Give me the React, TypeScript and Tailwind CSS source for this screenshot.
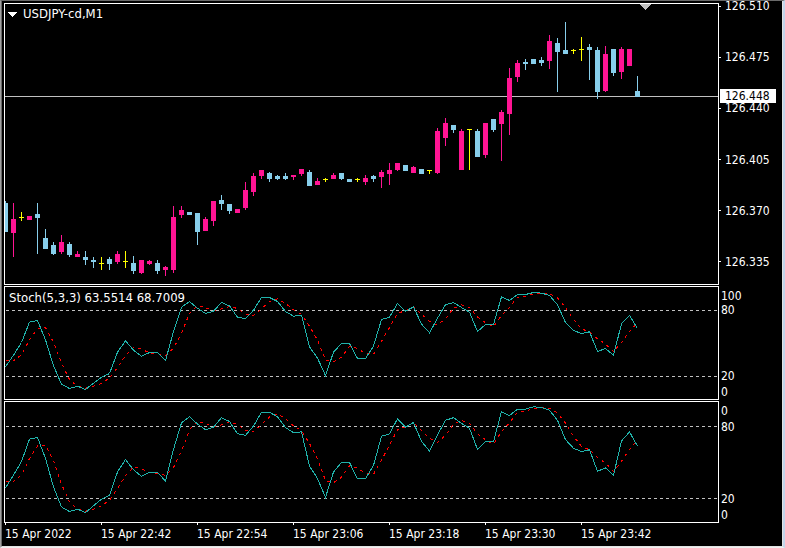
import type { ReactNode } from 'react';

type Kind = 'up' | 'down' | 'doji';

// [kind, high, low, bodyTop, bodyBottom], in window pixels
type Candle = [Kind, number, number, number, number];

const PLOT_TOP = 4;
const STEP = 8;

const COLORS: Record<Kind, string> = {
  up: '#ff1493',
  down: '#87ceeb',
  doji: '#ffff00',
};

const CANDLES: Candle[] = [
  ['down', 201, 232, 203, 232],
  ['up', 203, 257, 219, 233],
  ['doji', 212, 221, 217, 218],
  ['up', 216, 220, 216, 220],
  ['down', 203, 254, 214, 218],
  ['down', 229, 249, 238, 249],
  ['down', 242, 255, 245, 254],
  ['up', 235, 254, 242, 252],
  ['down', 242, 257, 244, 255],
  ['up', 251, 257, 254, 257],
  ['down', 251, 265, 257, 260],
  ['down', 257, 268, 260, 262],
  ['doji', 257, 270, 263, 264],
  ['down', 257, 270, 259, 264],
  ['up', 251, 264, 254, 262],
  ['doji', 251, 268, 261, 262],
  ['down', 256, 274, 263, 271],
  ['up', 260, 274, 260, 273],
  ['up', 260, 265, 261, 264],
  ['down', 260, 274, 263, 271],
  ['up', 266, 276, 267, 270],
  ['up', 206, 273, 217, 270],
  ['up', 206, 218, 210, 215],
  ['down', 212, 215, 212, 215],
  ['down', 213, 245, 213, 232],
  ['up', 217, 231, 219, 231],
  ['up', 201, 226, 201, 221],
  ['down', 195, 210, 200, 204],
  ['down', 204, 214, 204, 211],
  ['up', 209, 213, 209, 213],
  ['up', 182, 210, 190, 208],
  ['up', 173, 196, 176, 192],
  ['up', 170, 179, 170, 176],
  ['down', 172, 182, 173, 179],
  ['down', 175, 180, 176, 179],
  ['down', 173, 180, 176, 179],
  ['up', 175, 180, 175, 177],
  ['up', 169, 176, 169, 174],
  ['down', 170, 186, 172, 186],
  ['up', 178, 185, 181, 185],
  ['doji', 178, 182, 179, 180],
  ['up', 173, 179, 175, 179],
  ['down', 173, 180, 173, 179],
  ['down', 179, 182, 179, 182],
  ['doji', 178, 182, 179, 180],
  ['up', 175, 185, 178, 182],
  ['down', 175, 182, 176, 179],
  ['up', 170, 188, 172, 177],
  ['up', 163, 185, 170, 174],
  ['up', 163, 171, 163, 170],
  ['down', 165, 171, 165, 171],
  ['up', 166, 173, 167, 173],
  ['down', 169, 174, 169, 174],
  ['doji', 170, 174, 170, 171],
  ['up', 128, 174, 131, 173],
  ['up', 118, 146, 123, 138],
  ['down', 125, 133, 125, 130],
  ['up', 129, 170, 131, 170],
  ['doji', 129, 170, 129, 130],
  ['down', 129, 157, 131, 157],
  ['up', 123, 158, 123, 155],
  ['down', 119, 132, 119, 130],
  ['up', 110, 161, 112, 124],
  ['up', 68, 135, 78, 114],
  ['up', 60, 82, 63, 77],
  ['down', 59, 70, 62, 64],
  ['down', 59, 64, 59, 64],
  ['down', 57, 66, 60, 63],
  ['up', 35, 69, 41, 61],
  ['down', 38, 92, 43, 52],
  ['down', 22, 54, 50, 54],
  ['doji', 49, 54, 50, 51],
  ['doji', 37, 61, 49, 50],
  ['down', 44, 80, 47, 50],
  ['down', 47, 99, 50, 92],
  ['up', 46, 92, 54, 91],
  ['down', 49, 76, 49, 73],
  ['up', 47, 79, 49, 72],
  ['up', 49, 66, 49, 66],
  ['down', 76, 97, 91, 97],
];

const STOCH = [
  28.8, 39.4, 50.9, 69.4, 70.9, 53.3, 29.7, 13.0, 9.1, 11.2,
  8.2, 13.9, 19.4, 22.7, 42.1, 52.4, 43.9, 38.5, 41.8, 41.8,
  34.5, 60.9, 83.0, 88.2, 82.1, 77.3, 79.4, 87.3, 84.2, 73.9,
  72.7, 80.3, 91.8, 91.8, 88.2, 79.1, 74.8, 75.5, 47.0, 36.7,
  20.9, 42.1, 50.0, 50.0, 36.4, 36.4, 47.6, 71.8, 73.9, 86.4,
  79.4, 83.3, 67.6, 59.7, 73.0, 85.2, 87.3, 82.7, 78.5, 60.9,
  67.3, 67.3, 92.4, 89.1, 94.5, 94.5, 96.4, 95.8, 93.6, 85.2,
  69.1, 61.8, 59.1, 60.6, 42.7, 45.5, 39.4, 67.9, 75.5, 63.6,
];

// %D is the 3-bar average of %K
const SIGNAL = STOCH.map((v, i) =>
  i < 2 ? 34.2 : (v + STOCH[i - 1] + STOCH[i - 2]) / 3,
);

const PRICES = ['126.510', '126.475', '126.440', '126.405', '126.370', '126.335'];

const TIMES = [
  '15 Apr 2022',
  '15 Apr 22:42',
  '15 Apr 22:54',
  '15 Apr 23:06',
  '15 Apr 23:18',
  '15 Apr 23:30',
  '15 Apr 23:42',
];

function PriceChart() {
  return (
    <svg className="block h-[280px] w-full" shapeRendering="crispEdges" aria-label="USDJPY candles">
      <rect x={0} y={96 - PLOT_TOP} width="100%" height={1} fill="#c0c0c0" />
      <path d="M634 0h12l-6 6z" fill="#c0c0c0" />
      {CANDLES.map(([kind, high, low, top, bottom], i) => (
        <g key={i} fill={COLORS[kind]}>
          <rect x={i * STEP} y={high - PLOT_TOP} width={1} height={low - high} />
          <rect x={i * STEP - 2} y={top - PLOT_TOP} width={5} height={bottom - top} />
        </g>
      ))}
    </svg>
  );
}

interface StochChartProps {
  className: string;
  level80: number;
  scale: number;
}

function StochChart({ className, level80, scale }: StochChartProps) {
  const toY = (v: number) => level80 + (80 - v) * scale;
  const points = (values: number[]) =>
    values.map((v, i) => `${i * STEP + 0.5},${(toY(v) + 0.5).toFixed(1)}`).join(' ');

  return (
    <svg className={`block w-full ${className}`} shapeRendering="crispEdges" fill="none" aria-label="Stochastic oscillator">
      {[80, 20].map((level) => (
        <line
          key={level}
          x1={1}
          x2="100%"
          y1={toY(level) + 0.5}
          y2={toY(level) + 0.5}
          stroke="#c0c0c0"
          strokeDasharray="3 3"
        />
      ))}
      <polyline points={points(SIGNAL)} stroke="#ff0000" strokeDasharray="3 4" />
      <polyline points={points(STOCH)} stroke="#20b2aa" />
    </svg>
  );
}

function Panel({ children }: { children: ReactNode }) {
  return <div className="relative min-w-0 flex-1 overflow-hidden border border-white">{children}</div>;
}

export default function App() {
  return (
    <main className="border-t border-r-2 border-b border-l border-t-[#696969] border-r-[#c3d5ea] border-b-[#f0f0f0] border-l-[#a0a0a0] font-['DejaVu_Sans_Condensed','DejaVu_Sans',sans-serif] text-[12px] leading-[14px] text-white">
      <div className="overflow-hidden border-r border-b border-l border-r-[#e3e3e3] border-b-[#e3e3e3] border-l-[#696969] bg-black pt-[2px] pl-[2px]">
        <div className="flex flex-col gap-px">
          <section className="flex">
            <Panel>
              <PriceChart />
              <h1 className="absolute top-[3px] left-[3px] flex items-center gap-[6px] text-[13px]">
                <svg className="h-[5px] w-[9px]" viewBox="0 0 9 5" shapeRendering="crispEdges">
                  <path d="M0 0h9L4.5 5z" fill="#fff" />
                </svg>
                USDJPY-cd,M1
              </h1>
            </Panel>
            <div className="relative w-[63px]">
              <ul className="-mt-1 flex h-[270px] flex-col justify-between">
                {PRICES.map((price) => (
                  <li key={price} className="flex items-center gap-1">
                    <span className="h-px w-[2px] bg-white" />
                    {price}
                  </li>
                ))}
              </ul>
              <strong className="absolute top-[86px] left-px w-14 bg-white pl-[5px] font-normal text-black">
                126.448
              </strong>
            </div>
          </section>

          <section className="flex">
            <Panel>
              <StochChart className="h-[112px]" level80={23} scale={1.1} />
              <h2 className="absolute top-1 left-1 text-[13px]">Stoch(5,3,3) 63.5514 68.7009</h2>
            </Panel>
            <ul className="w-[63px] pt-[3px] pl-[2px]">
              <li>100</li>
              <li>80</li>
              <li className="mt-[52px]">20</li>
              <li className="mt-[2px]">0</li>
            </ul>
          </section>

          <section className="flex">
            <Panel>
              <StochChart className="h-[120px]" level80={24} scale={1.2} />
            </Panel>
            <ul className="w-[63px] pt-[3px] pl-[2px]">
              <li>0</li>
              <li className="mt-[2px]">80</li>
              <li className="mt-[58px]">20</li>
              <li className="mt-[2px]">0</li>
            </ul>
          </section>
        </div>

        <ol className="flex h-[23px] pl-px whitespace-nowrap">
          {TIMES.map((time) => (
            <li key={time} className="w-24">
              <span className="mb-[2px] block h-[2px] w-px bg-white" />
              {time}
            </li>
          ))}
        </ol>
      </div>
    </main>
  );
}
